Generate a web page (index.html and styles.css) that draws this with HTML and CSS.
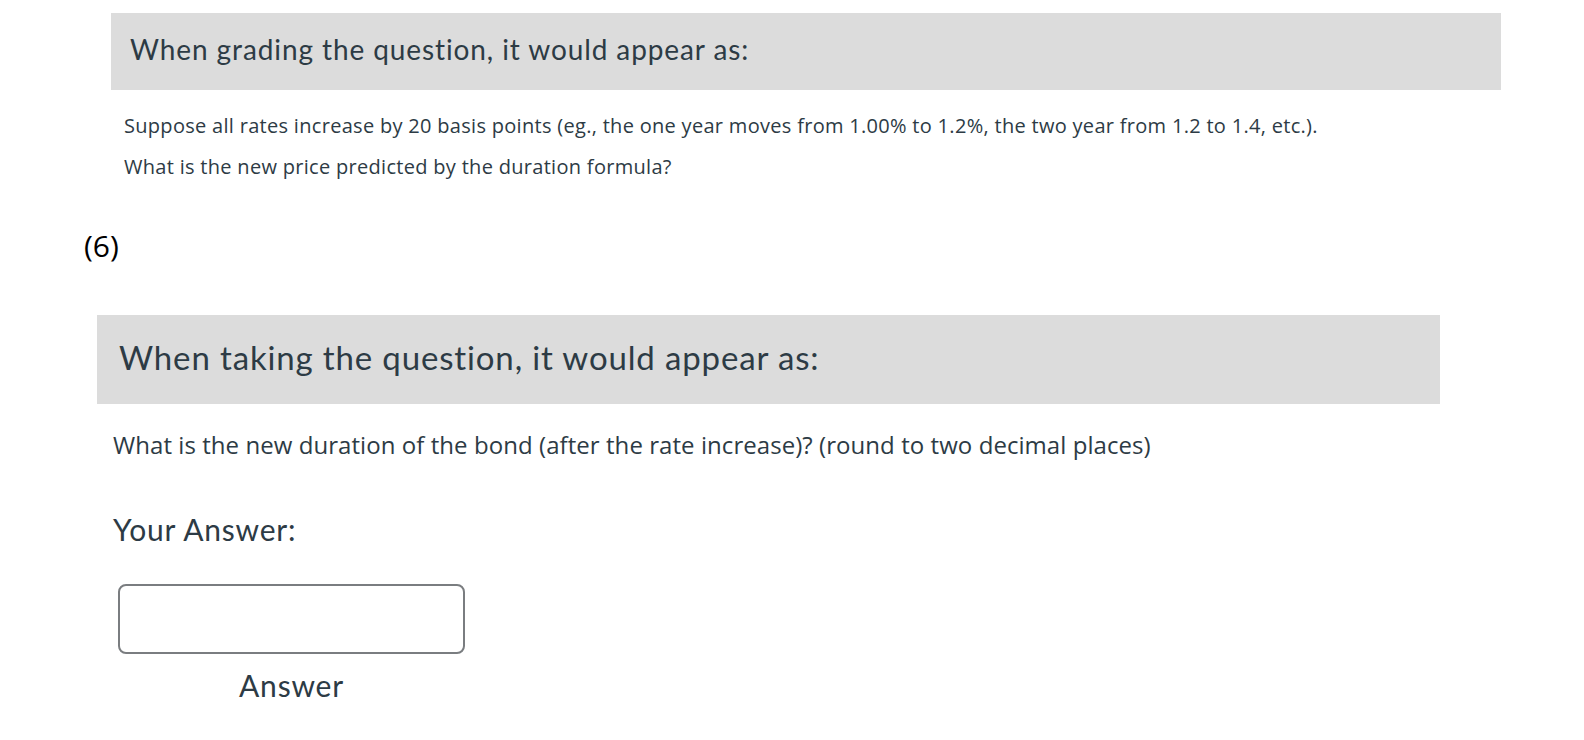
FILE: index.html
```html
<!DOCTYPE html>
<html>
<head>
<meta charset="utf-8">
<link rel="stylesheet" href="styles.css">
</head>
<body>
<section class="grading">
  <div class="banner banner-grading">When grading the question, it would appear as:</div>
  <div class="question-small">
    <p>Suppose all rates increase by 20 basis points (eg., the one year moves from 1.00% to 1.2%, the two year from 1.2 to 1.4, etc.).</p>
    <p>What is the new price predicted by the duration formula?</p>
  </div>
</section>
<div class="num">(6)</div>
<section class="taking">
  <div class="banner banner-taking">When taking the question, it would appear as:</div>
  <p class="question-large">What is the new duration of the bond (after the rate increase)? (round to two decimal places)</p>
  <div class="your-answer">Your Answer:</div>
  <div class="answer-field">
    <input class="answer-input" type="text" aria-label="Answer">
    <div class="answer-label">Answer</div>
  </div>
</section>
</body>
</html>
```
FILE: styles.css
```css
html, body {
  margin: 0;
  padding: 0;
  background: #ffffff;
}
body {
  width: 1584px;
  height: 740px;
  overflow: hidden;
  color: #2d3b45;
}
.grading {
  margin: 13px 0 0 111px;
  width: 1390px;
}
.banner {
  background: #dcdcdc;
  font-family: Lato, "Open Sans", sans-serif;
  color: #2d3b45;
  display: flex;
  align-items: center;
  box-sizing: border-box;
}
.banner-grading {
  height: 77px;
  padding: 0 0 5px 19px;
  font-size: 28px;
  letter-spacing: 0.9px;
}
.question-small {
  padding: 22px 0 0 13px;
  font-family: "Open Sans", sans-serif;
  font-size: 20px;
  letter-spacing: 0.3px;
  color: #2d3b45;
}
.question-small p {
  margin: 0;
  height: 41px;
  line-height: 28px;
}
.num {
  margin: 34px 0 0 84px;
  font-family: "Open Sans", sans-serif;
  font-size: 30px;
  color: #000000;
  line-height: 36px;
}
.taking {
  margin: 51px 0 0 97px;
  width: 1343px;
}
.banner-taking {
  height: 89px;
  padding: 0 0 5px 22px;
  font-size: 33px;
  letter-spacing: 0.85px;
}
.question-large {
  margin: 25px 0 0 16px;
  font-family: "Open Sans", sans-serif;
  font-size: 24px;
  letter-spacing: 0.06px;
  line-height: 32px;
}
.your-answer {
  margin: 50px 0 0 16px;
  font-family: Lato, sans-serif;
  font-size: 30px;
  letter-spacing: 0.8px;
  line-height: 36px;
}
.answer-field {
  margin: 37px 0 0 21px;
  width: 347px;
  display: flex;
  flex-direction: column;
  align-items: center;
}
.answer-input {
  box-sizing: border-box;
  width: 347px;
  height: 70px;
  border: 2px solid #7a7d80;
  border-radius: 8px;
  background: #ffffff;
  margin: 0;
}
.answer-label {
  margin-top: 13px;
  font-family: Lato, sans-serif;
  font-size: 30px;
  letter-spacing: 0.8px;
  line-height: 36px;
}
```
